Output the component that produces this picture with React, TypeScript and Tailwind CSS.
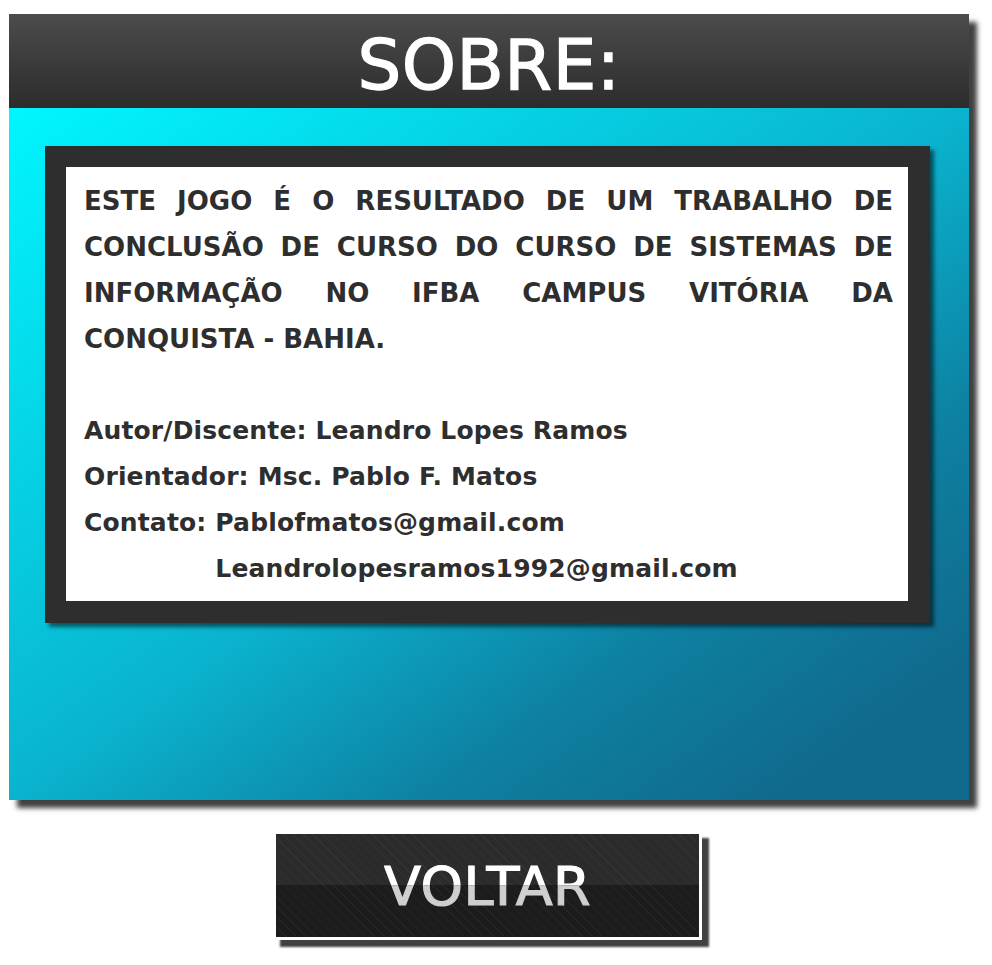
import type { ReactNode } from 'react'

const font = { fontFamily: '"DejaVu Sans", "Liberation Sans", sans-serif' }

function JustifiedLine({ children, last }: { children: ReactNode; last?: boolean }) {
  return (
    <div className={last ? 'text-left' : 'text-justify [text-align-last:justify]'}>{children}</div>
  )
}

const introLines = [
  'ESTE JOGO É O RESULTADO DE UM TRABALHO DE',
  'CONCLUSÃO DE CURSO DO CURSO DE SISTEMAS DE',
  'INFORMAÇÃO NO IFBA CAMPUS VITÓRIA DA',
  'CONQUISTA - BAHIA.',
]

export default function App() {
  return (
    <div className="min-h-screen bg-white" style={font}>
      <div className="pl-[9px] pt-[14px]">
        <div className="w-[960px] shadow-[8px_8px_5px_rgba(0,0,0,0.75)]">
          <div className="flex h-[94px] items-center justify-center bg-linear-to-b from-[#4c4c4c] to-[#2c2c2c] pt-[8px]">
            <h1 className="text-[69px] leading-none tracking-[0.5px] text-white [-webkit-text-stroke:1.3px_white]">
              SOBRE:
            </h1>
          </div>

          <div className="h-[692px] bg-[linear-gradient(to_bottom_right,#00f6ff_0%,#0ab3ce_50%,#0e80a1_72%,#106a8e_90%)] pl-[36px] pt-[38px]">
            <div className="w-[885px] bg-[#2e2e2e] p-[21px] pb-[22px] pr-[22px] shadow-[4px_4px_4px_rgba(0,0,0,0.55)]">
              <div className="bg-white pb-[9px] pl-[18px] pr-[15px] pt-[11px] text-[26px] font-bold leading-[46px] text-[#2e2e2e]">
                {introLines.map((line, i) => (
                  <JustifiedLine key={line} last={i === introLines.length - 1}>
                    {line}
                  </JustifiedLine>
                ))}
                <div className="h-[46px]" />
                <div className="text-[25px] tracking-[0.15px]">
                  <div>Autor/Discente: Leandro Lopes Ramos</div>
                  <div>Orientador: Msc. Pablo F. Matos</div>
                  <div>Contato: Pablofmatos@gmail.com</div>
                  <div>
                    <span className="invisible">Contato: </span>
                    Leandrolopesramos1992@gmail.com
                  </div>
                </div>
              </div>
            </div>
          </div>
        </div>

        <div className="flex w-[960px] justify-center pr-[3px] pt-[31px]">
          <button className="grid h-[109px] w-[429px] place-items-center border-[3px] border-white bg-[image:repeating-linear-gradient(45deg,rgba(255,255,255,0.035)_0px,rgba(255,255,255,0.035)_1px,transparent_1px,transparent_7px),linear-gradient(to_bottom,#2b2b2b_50%,#1c1c1c_50%)] shadow-[7px_7px_2px_rgba(0,0,0,0.75)]">
            <span className="col-start-1 row-start-1 flex h-full items-center pt-[2px] text-[54px] leading-none tracking-[0.4px] text-white [-webkit-text-stroke:1.2px_white] [clip-path:inset(0_0_50%_0)]">
              VOLTAR
            </span>
            <span
              aria-hidden
              className="col-start-1 row-start-1 flex h-full items-center pt-[2px] text-[54px] leading-none tracking-[0.4px] text-[#cfcfcf] [-webkit-text-stroke:1.2px_#cfcfcf] [clip-path:inset(50%_0_0_0)]"
            >
              VOLTAR
            </span>
          </button>
        </div>
      </div>
    </div>
  )
}
